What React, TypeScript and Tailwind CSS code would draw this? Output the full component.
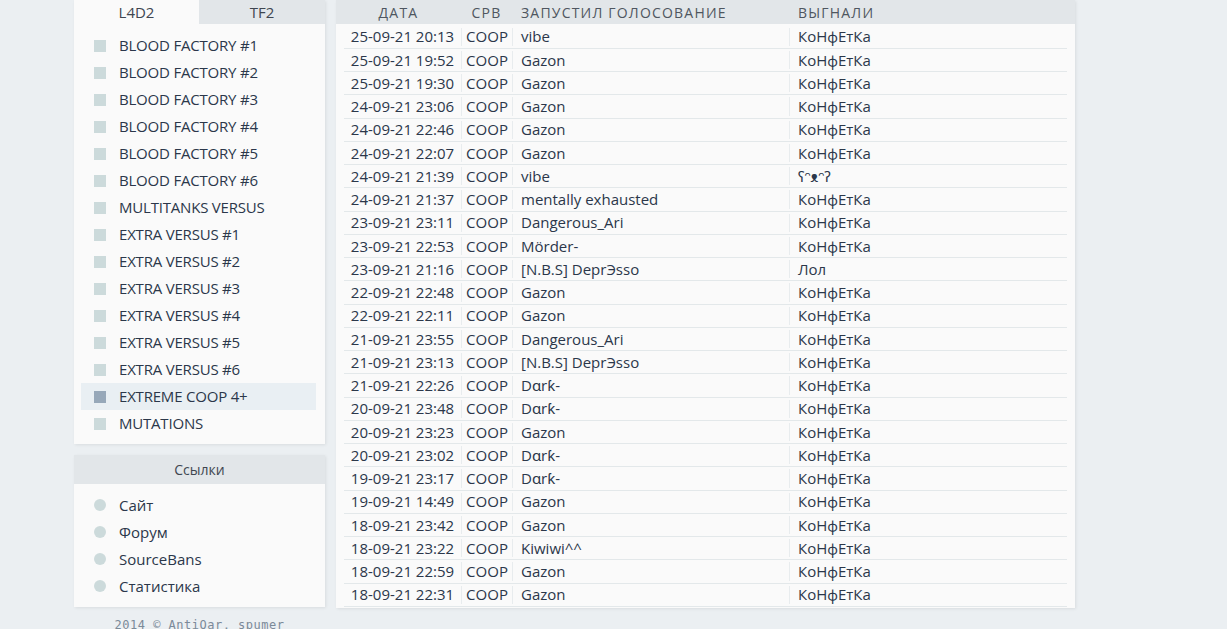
import React from 'react';

const maps = [
  'BLOOD FACTORY #1',
  'BLOOD FACTORY #2',
  'BLOOD FACTORY #3',
  'BLOOD FACTORY #4',
  'BLOOD FACTORY #5',
  'BLOOD FACTORY #6',
  'MULTITANKS VERSUS',
  'EXTRA VERSUS #1',
  'EXTRA VERSUS #2',
  'EXTRA VERSUS #3',
  'EXTRA VERSUS #4',
  'EXTRA VERSUS #5',
  'EXTRA VERSUS #6',
  'EXTREME COOP 4+',
  'MUTATIONS',
];

const links = ['Сайт', 'Форум', 'SourceBans', 'Статистика'];

const K = 'КоНфЕтКа';
const D = 'Dɑrƙ-';

const votes: [string, string, string][] = [
  ['25-09-21 20:13', 'vibe', K],
  ['25-09-21 19:52', 'Gazon', K],
  ['25-09-21 19:30', 'Gazon', K],
  ['24-09-21 23:06', 'Gazon', K],
  ['24-09-21 22:46', 'Gazon', K],
  ['24-09-21 22:07', 'Gazon', K],
  ['24-09-21 21:39', 'vibe', 'ʕᵔᴥᵔʔ'],
  ['24-09-21 21:37', 'mentally exhausted', K],
  ['23-09-21 23:11', 'Dangerous_Ari', K],
  ['23-09-21 22:53', 'Mörder-', K],
  ['23-09-21 21:16', '[N.B.S] DeprЭsso', 'Лол'],
  ['22-09-21 22:48', 'Gazon', K],
  ['22-09-21 22:11', 'Gazon', K],
  ['21-09-21 23:55', 'Dangerous_Ari', K],
  ['21-09-21 23:13', '[N.B.S] DeprЭsso', K],
  ['21-09-21 22:26', D, K],
  ['20-09-21 23:48', D, K],
  ['20-09-21 23:23', 'Gazon', K],
  ['20-09-21 23:02', D, K],
  ['19-09-21 23:17', D, K],
  ['19-09-21 14:49', 'Gazon', K],
  ['18-09-21 23:42', 'Gazon', K],
  ['18-09-21 23:22', 'Kiwiwi^^', K],
  ['18-09-21 22:59', 'Gazon', K],
  ['18-09-21 22:31', 'Gazon', K],
];

export default function App() {
  return (
    <div
      className="min-h-[629px] bg-[#ebeff2] text-[15px] text-[#2b374a] overflow-hidden"
      style={{ fontFamily: '"Open Sans", "Noto Sans", sans-serif' }}
    >
      <div className="flex items-start gap-[11px] pl-[74px]">
        {/* sidebar */}
        <div className="w-[251px] shrink-0 flex flex-col gap-[11px]">
          <div className="bg-[#fafafa] shadow-[1px_1px_3px_rgba(0,0,0,0.08)]">
            <div className="flex h-[24px] text-[#3f4650]">
              <div className="w-[125px] flex items-center justify-center bg-[#fafafa]">L4D2</div>
              <div className="flex-1 flex items-center justify-center bg-[#e2e6e9]">TF2</div>
            </div>
            <ul className="pt-[8px] pb-[7px] pl-[7px] pr-[9px]">
              {maps.map(m => {
                const active = m === 'EXTREME COOP 4+';
                return (
                  <li
                    key={m}
                    className={`h-[27px] flex items-center pl-[13px] gap-[13px] ${active ? 'bg-[#e9eff3]' : ''}`}
                  >
                    <span className={`w-[12px] h-[12px] shrink-0 ${active ? 'bg-[#97a8b9]' : 'bg-[#ccdadb]'}`}></span>
                    <span className="leading-none tracking-[-0.2px]">{m}</span>
                  </li>
                );
              })}
            </ul>
          </div>

          <div className="bg-[#fafafa] shadow-[1px_1px_3px_rgba(0,0,0,0.08)]">
            <div className="h-[29px] flex items-center justify-center bg-[#e2e6e9] text-[#3f4650] text-[14px]">Ссылки</div>
            <ul className="py-[7.5px] pl-[7px] pr-[9px]">
              {links.map(l => (
                <li key={l} className="h-[27px] flex items-center pl-[13px] gap-[13px]">
                  <span className="w-[12px] h-[12px] rounded-full bg-[#ccdadb] shrink-0"></span>
                  <span className="leading-none">{l}</span>
                </li>
              ))}
            </ul>
          </div>

          <div
            className="-mt-[1px] text-center text-[12px] leading-[16px] tracking-[0.5px] text-[#7b8a99]"
            style={{ fontFamily: '"DejaVu Sans Mono", monospace' }}
          >
            2014 © AntiQar, spumer
          </div>
        </div>

        {/* votes table */}
        <div className="w-[739px] shrink-0 bg-[#fafafa] shadow-[1px_1px_3px_rgba(0,0,0,0.08)]">
          <div className="h-[24px] bg-[#e2e6e9] flex px-[8px] text-[14px] tracking-[1.2px] text-[#4f5660]">
            <div className="w-[117px] flex items-center justify-center pr-[8px]">ДАТА</div>
            <div className="w-[51px] flex items-center justify-center">СРВ</div>
            <div className="w-[277px] flex items-center pl-[9px]">ЗАПУСТИЛ ГОЛОСОВАНИЕ</div>
            <div className="w-[277px] flex items-center pl-[9px]">ВЫГНАЛИ</div>
          </div>
          <div className="px-[8px] pt-[1.5px] pb-[1px]">
            {votes.map(([date, who, kicked], i) => (
              <div key={i} className="h-[23.25px] flex border-b border-[#e3e8ea]">
                <div className="w-[117px] flex items-center justify-center">{date}</div>
                <div className="w-[51px] flex items-center justify-center border-l border-[#e8ecee] my-[2px]">COOP</div>
                <div className="w-[277px] flex items-center pl-[8px] border-l border-[#e8ecee] my-[2px]">{who}</div>
                <div className="w-[277px] flex items-center pl-[8px] border-l border-[#e8ecee] my-[2px]">{kicked}</div>
              </div>
            ))}
          </div>
        </div>
      </div>
    </div>
  );
}
